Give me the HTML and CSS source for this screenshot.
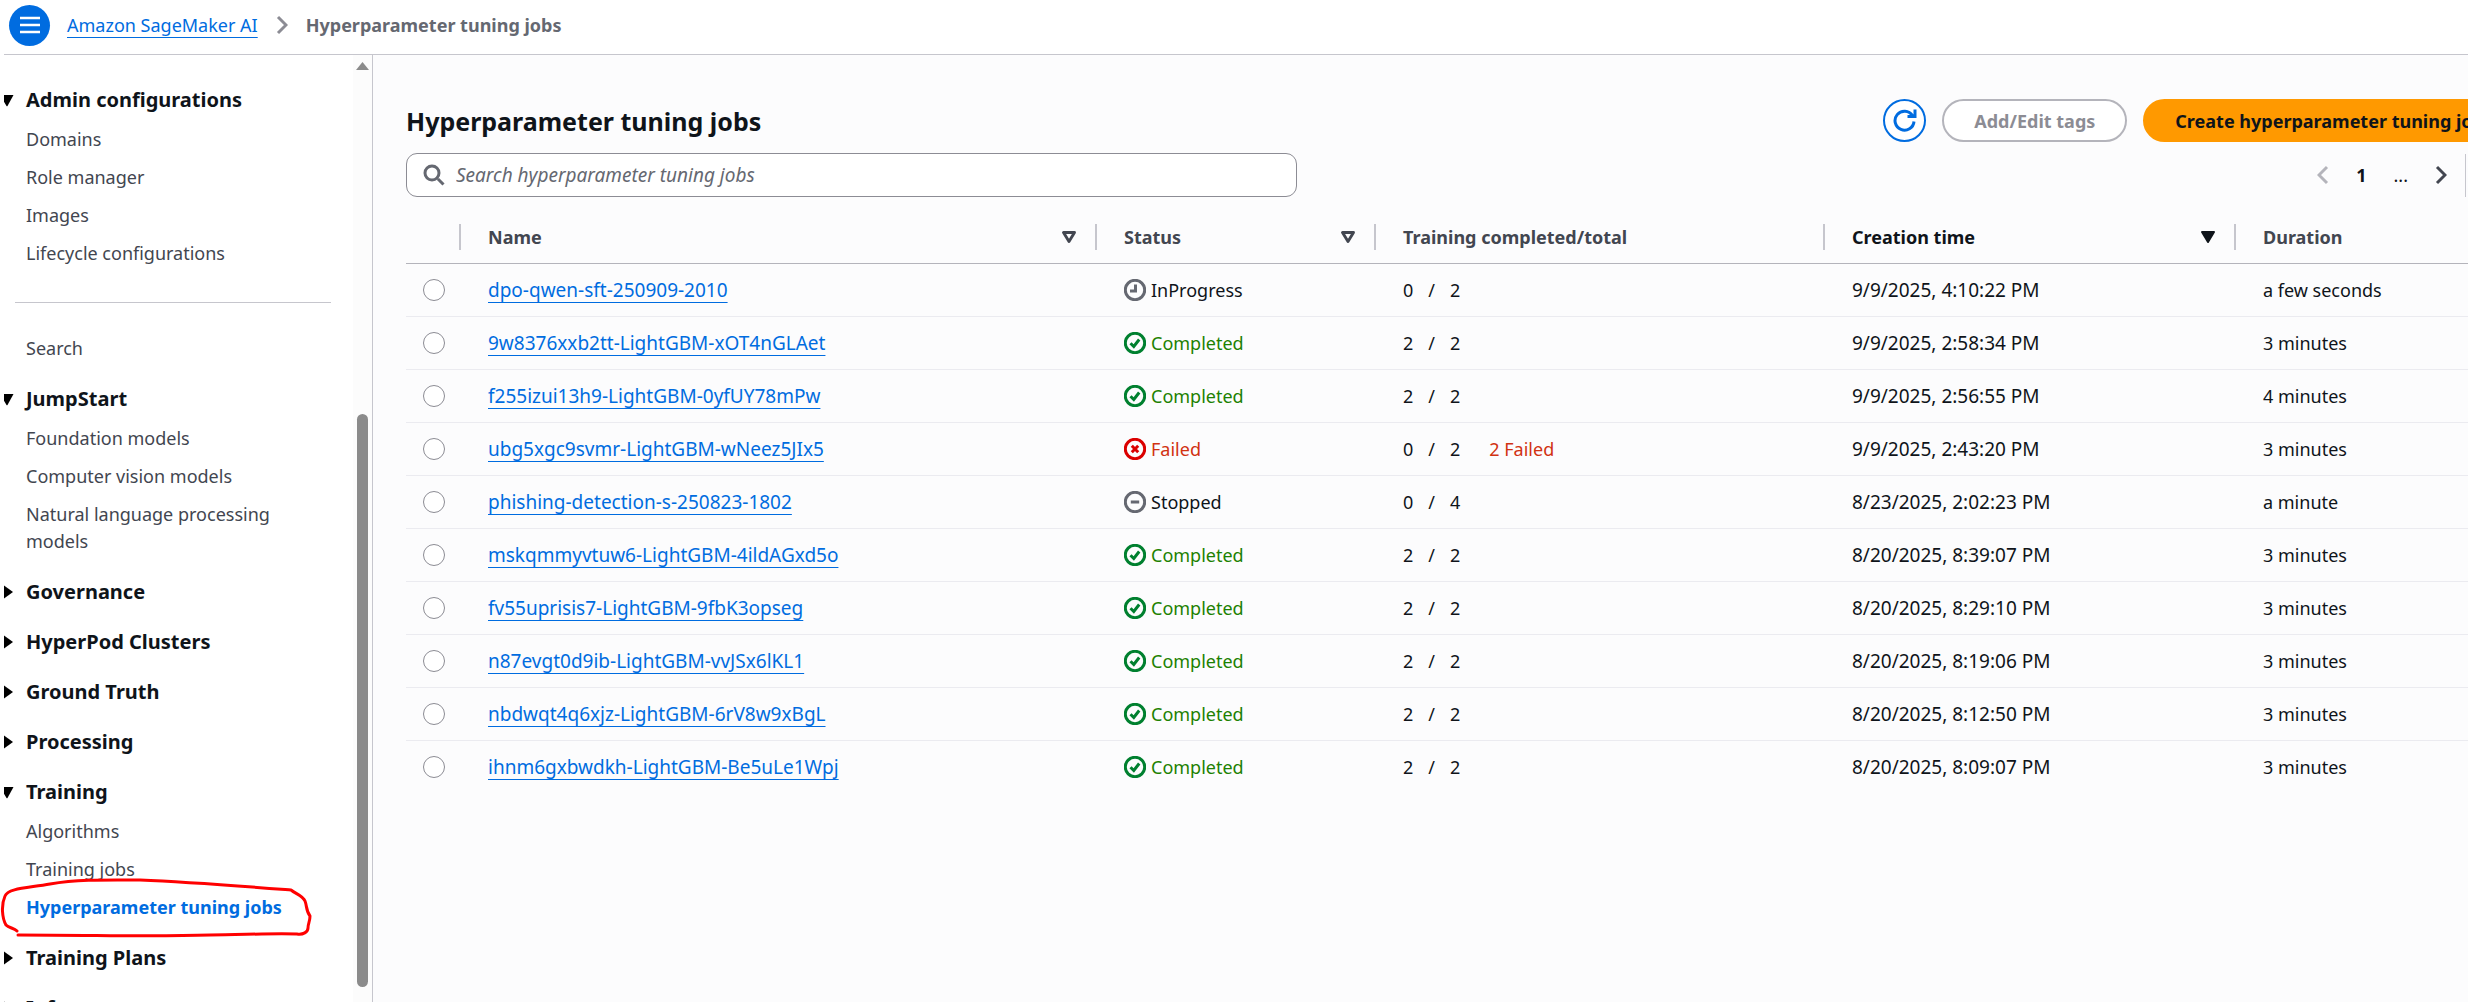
FILE: index.html
```html
<!DOCTYPE html>
<html lang="en">
<head>
<meta charset="utf-8">
<title>Hyperparameter tuning jobs</title>
<link rel="stylesheet" href="styles.css">
</head>
<body>
<svg class="sprite" aria-hidden="true">
  <symbol id="open" viewBox="4 0 12 14"><path d="M0 2h13.500L7.500 13Q7 13.500 6.500 13Z"/></symbol>
  <symbol id="closed" viewBox="4 0 12 14"><path d="M4 0.500L13 7L4 13.500Z"/></symbol>
  <symbol id="sort" viewBox="0 0 16 14"><path d="M2.500 2.500h11L8 11.500Z" fill="none" stroke="currentColor" stroke-width="2.900" stroke-linejoin="round"/></symbol>
  <symbol id="sorted" viewBox="0 0 16 14"><path d="M2 2h12L8 12Z" fill="currentColor" stroke="currentColor" stroke-width="2" stroke-linejoin="round"/></symbol>
  <symbol id="ok" viewBox="0 0 22 22"><circle cx="11" cy="11" r="9.700"/><path d="M6.500 11.200l3.300 3.300 5.400-7"/></symbol>
  <symbol id="fail" viewBox="0 0 22 22"><circle cx="11" cy="11" r="9.700"/><path d="M7.800 7.800l6.400 6.400M14.200 7.800l-6.400 6.400"/></symbol>
  <symbol id="stop" viewBox="0 0 22 22"><circle cx="11" cy="11" r="9.700"/><path d="M6.800 11h8.400"/></symbol>
  <symbol id="wait" viewBox="0 0 22 22"><circle cx="11" cy="11" r="9.700"/><path d="M11.500 5.500v6.500H6"/></symbol>
</svg>

<header class="topbar">
  <button class="menu" type="button" aria-label="Open navigation">
    <svg width="20" height="18" viewBox="0 0 20 18"><path d="M0 2h20M0 9h20M0 16h20" stroke="#fff" stroke-width="2.500"/></svg>
  </button>
  <nav class="crumbs" aria-label="Breadcrumbs">
    <a class="link" href="#">Amazon SageMaker AI</a>
    <svg width="12" height="20" viewBox="0 0 12 20"><path d="M2 2l8 8-8 8" fill="none" stroke="#8c8c94" stroke-width="3"/></svg>
    <span class="current">Hyperparameter tuning jobs</span>
  </nav>
</header>

<div class="shell">
  <nav class="sidebar" aria-label="SageMaker">
    <h2><svg class="caret"><use href="#open"/></svg>Admin configurations</h2>
    <ul>
      <li><a href="#">Domains</a></li>
      <li><a href="#">Role manager</a></li>
      <li><a href="#">Images</a></li>
      <li><a href="#">Lifecycle configurations</a></li>
    </ul>
    <hr>
    <ul>
      <li><a href="#">Search</a></li>
    </ul>
    <h2><svg class="caret"><use href="#open"/></svg>JumpStart</h2>
    <ul>
      <li><a href="#">Foundation models</a></li>
      <li><a href="#">Computer vision models</a></li>
      <li><a href="#">Natural language processing models</a></li>
    </ul>
    <h2><svg class="caret"><use href="#closed"/></svg>Governance</h2>
    <h2><svg class="caret"><use href="#closed"/></svg>HyperPod Clusters</h2>
    <h2><svg class="caret"><use href="#closed"/></svg>Ground Truth</h2>
    <h2><svg class="caret"><use href="#closed"/></svg>Processing</h2>
    <h2><svg class="caret"><use href="#open"/></svg>Training</h2>
    <ul>
      <li><a href="#">Algorithms</a></li>
      <li><a href="#">Training jobs</a></li>
      <li class="marked"><a class="active" href="#" aria-current="page">Hyperparameter tuning jobs</a>
        <svg class="loop" width="314" height="64" viewBox="0 877 314 64"><path d="M17 931C14 928 9 928 6 925C2 918 1 905 5 896C8 888 28 888 50 884C80 879 110 880 140 880C190 882 240 886 291 890C296 894 303 896 305 901C307 906 306 911 310 916C310 922 308 923 308 928C308 932 303 935 297 934C270 933 240 935 210 935C150 937 100 935 18 935"/></svg>
      </li>
    </ul>
    <h2><svg class="caret"><use href="#closed"/></svg>Training Plans</h2>
    <h2><svg class="caret"><use href="#closed"/></svg>Inference</h2>
  </nav>
  <div class="track" aria-hidden="true">
    <svg width="13" height="8" viewBox="0 0 13 8"><path d="M0 8L6.500 0L13 8Z" fill="#8b8b8b"/></svg>
    <div class="before"></div>
    <div class="thumb"></div>
  </div>

  <main class="main">
    <div class="content">
      <div class="title-row">
        <h1>Hyperparameter tuning jobs</h1>
        <div class="actions">
          <button class="btn refresh" type="button" aria-label="Refresh">
            <svg width="24" height="28" viewBox="0 0 24 28"><path d="M21 14.500A9.500 9.500 0 1 1 19.500 8.500M22 2.500V9.500H14.500" fill="none" stroke="#006ce0" stroke-width="3"/></svg>
          </button>
          <button class="btn tags" type="button" disabled>Add/Edit tags</button>
          <button class="btn create" type="button">Create hyperparameter tuning job</button>
        </div>
      </div>
      <div class="filter-row">
        <label class="search">
          <svg width="22" height="22" viewBox="0 0 22 22"><path d="M15 15l5.500 5.500M16 9A7 7 0 1 1 2 9A7 7 0 1 1 16 9" fill="none" stroke="#656871" stroke-width="3"/></svg>
          <input type="text" placeholder="Search hyperparameter tuning jobs" aria-label="Search hyperparameter tuning jobs">
        </label>
        <div class="pages">
          <button type="button" aria-label="Previous page" disabled><svg width="12" height="20" viewBox="0 0 12 20"><path d="M10 2l-8 8 8 8" fill="none" stroke="#b4b4bb" stroke-width="3"/></svg></button>
          <button class="page" type="button">1</button>
          <span class="dots">...</span>
          <button type="button" aria-label="Next page"><svg width="12" height="20" viewBox="0 0 12 20"><path d="M2 2l8 8-8 8" fill="none" stroke="#424650" stroke-width="3"/></svg></button>
        </div>
      </div>

      <table class="jobs">
        <colgroup><col class="c-pick"><col class="c-name"><col class="c-status"><col class="c-training"><col class="c-created"><col></colgroup>
        <thead>
          <tr>
            <th></th>
            <th><div>Name<svg><use href="#sort"/></svg></div></th>
            <th><div>Status<svg><use href="#sort"/></svg></div></th>
            <th><div>Training completed/total</div></th>
            <th class="sorted"><div>Creation time<svg><use href="#sorted"/></svg></div></th>
            <th><div>Duration</div></th>
          </tr>
        </thead>
        <tbody>
          <tr><td><input type="radio" name="job" aria-label="dpo-qwen-sft-250909-2010"></td><td class="wide"><a class="link" href="#">dpo-qwen-sft-250909-2010</a></td><td><span class="status wait"><svg><use href="#wait"/></svg>InProgress</span></td><td><span class="count"><span>0</span><span>/</span><span>2</span></span></td><td class="wide">9/9/2025, 4:10:22 PM</td><td>a few seconds</td></tr>
          <tr><td><input type="radio" name="job" aria-label="9w8376xxb2tt-LightGBM-xOT4nGLAet"></td><td class="wide"><a class="link" href="#">9w8376xxb2tt-LightGBM-xOT4nGLAet</a></td><td><span class="status ok"><svg><use href="#ok"/></svg>Completed</span></td><td><span class="count"><span>2</span><span>/</span><span>2</span></span></td><td class="wide">9/9/2025, 2:58:34 PM</td><td>3 minutes</td></tr>
          <tr><td><input type="radio" name="job" aria-label="f255izui13h9-LightGBM-0yfUY78mPw"></td><td class="wide"><a class="link" href="#">f255izui13h9-LightGBM-0yfUY78mPw</a></td><td><span class="status ok"><svg><use href="#ok"/></svg>Completed</span></td><td><span class="count"><span>2</span><span>/</span><span>2</span></span></td><td class="wide">9/9/2025, 2:56:55 PM</td><td>4 minutes</td></tr>
          <tr><td><input type="radio" name="job" aria-label="ubg5xgc9svmr-LightGBM-wNeez5JIx5"></td><td class="wide"><a class="link" href="#">ubg5xgc9svmr-LightGBM-wNeez5JIx5</a></td><td><span class="status fail"><svg><use href="#fail"/></svg>Failed</span></td><td><span class="count"><span>0</span><span>/</span><span>2</span><span class="failed">2 Failed</span></span></td><td class="wide">9/9/2025, 2:43:20 PM</td><td>3 minutes</td></tr>
          <tr><td><input type="radio" name="job" aria-label="phishing-detection-s-250823-1802"></td><td class="wide"><a class="link" href="#">phishing-detection-s-250823-1802</a></td><td><span class="status wait"><svg><use href="#stop"/></svg>Stopped</span></td><td><span class="count"><span>0</span><span>/</span><span>4</span></span></td><td class="wide">8/23/2025, 2:02:23 PM</td><td>a minute</td></tr>
          <tr><td><input type="radio" name="job" aria-label="mskqmmyvtuw6-LightGBM-4ildAGxd5o"></td><td class="wide"><a class="link" href="#">mskqmmyvtuw6-LightGBM-4ildAGxd5o</a></td><td><span class="status ok"><svg><use href="#ok"/></svg>Completed</span></td><td><span class="count"><span>2</span><span>/</span><span>2</span></span></td><td class="wide">8/20/2025, 8:39:07 PM</td><td>3 minutes</td></tr>
          <tr><td><input type="radio" name="job" aria-label="fv55uprisis7-LightGBM-9fbK3opseg"></td><td class="wide"><a class="link" href="#">fv55uprisis7-LightGBM-9fbK3opseg</a></td><td><span class="status ok"><svg><use href="#ok"/></svg>Completed</span></td><td><span class="count"><span>2</span><span>/</span><span>2</span></span></td><td class="wide">8/20/2025, 8:29:10 PM</td><td>3 minutes</td></tr>
          <tr><td><input type="radio" name="job" aria-label="n87evgt0d9ib-LightGBM-vvJSx6lKL1"></td><td class="wide"><a class="link" href="#">n87evgt0d9ib-LightGBM-vvJSx6lKL1</a></td><td><span class="status ok"><svg><use href="#ok"/></svg>Completed</span></td><td><span class="count"><span>2</span><span>/</span><span>2</span></span></td><td class="wide">8/20/2025, 8:19:06 PM</td><td>3 minutes</td></tr>
          <tr><td><input type="radio" name="job" aria-label="nbdwqt4q6xjz-LightGBM-6rV8w9xBgL"></td><td class="wide"><a class="link" href="#">nbdwqt4q6xjz-LightGBM-6rV8w9xBgL</a></td><td><span class="status ok"><svg><use href="#ok"/></svg>Completed</span></td><td><span class="count"><span>2</span><span>/</span><span>2</span></span></td><td class="wide">8/20/2025, 8:12:50 PM</td><td>3 minutes</td></tr>
          <tr><td><input type="radio" name="job" aria-label="ihnm6gxbwdkh-LightGBM-Be5uLe1Wpj"></td><td class="wide"><a class="link" href="#">ihnm6gxbwdkh-LightGBM-Be5uLe1Wpj</a></td><td><span class="status ok"><svg><use href="#ok"/></svg>Completed</span></td><td><span class="count"><span>2</span><span>/</span><span>2</span></span></td><td class="wide">8/20/2025, 8:09:07 PM</td><td>3 minutes</td></tr>
        </tbody>
      </table>
    </div>
  </main>
</div>
</body>
</html>
```
FILE: styles.css
```css
* { box-sizing: border-box; }

body {
  margin: 0;
  height: 100vh;
  overflow: hidden;
  display: flex;
  flex-direction: column;
  background: #fff;
  color: #0f141a;
  font: 18px/28px "Noto Sans", "Open Sans", sans-serif;
}

button, input { font: inherit; color: inherit; }
button { cursor: pointer; }
.sprite { display: none; }

.link {
  color: #006ce0;
  text-decoration: underline;
  text-decoration-thickness: 1px;
  text-underline-offset: 5px;
}

/* Top bar */
.topbar {
  flex: none;
  height: 55px;
  margin-left: 4px;
  padding: 0 5px 4px;
  display: flex;
  align-items: center;
  gap: 17px;
  border-bottom: 1px solid #c6c6cd;
}
.menu {
  width: 41px;
  height: 41px;
  padding: 0;
  border: 0;
  border-radius: 50%;
  background: #006ce0;
  display: grid;
  place-items: center;
}
.crumbs { display: flex; align-items: center; gap: 18px; }
.current { color: #656871; font-weight: 700; }

/* Side navigation */
.shell { flex: 1; min-height: 0; display: flex; }
.sidebar {
  flex: none;
  width: 353px;
  padding-top: 31px;
  overflow: hidden;
}
.sidebar h2 {
  margin: 22px 0 0;
  padding-left: 4px;
  display: flex;
  align-items: center;
  gap: 10px;
  font-size: 20px;
  line-height: 28px;
  font-weight: 700;
}
.sidebar h2:first-child { margin-top: 0; }
.sidebar ul + h2 { margin-top: 23px; }
.caret { width: 12px; height: 14px; flex: none; }
.sidebar ul {
  margin: 12px 0 0;
  padding: 0 64px 0 26px;
  list-style: none;
  display: grid;
  gap: 11px;
  line-height: 27px;
}
.sidebar li a { display: block; color: #424650; text-decoration: none; }
.sidebar li a.active { color: #006ce0; font-weight: 700; }
.sidebar hr {
  margin: 35px 22px 32px 15px;
  border: 0;
  border-top: 1px solid #c6c6cd;
}
.marked { position: relative; }
.loop {
  position: absolute;
  left: -26px;
  top: -17px;
  fill: none;
  stroke: #f00;
  stroke-width: 3;
  stroke-linecap: round;
  stroke-linejoin: round;
  pointer-events: none;
}

.track {
  flex: none;
  width: 20px;
  padding: 7px 0 15px;
  display: flex;
  flex-direction: column;
  align-items: center;
  background: #fcfcfc;
  border-right: 1px solid #c6c6cd;
}
.before { flex: 344; }
.thumb { flex: 573; width: 11px; border-radius: 6px; background: #8b8b8b; }

/* Main panel: the toolbar and table run past the right edge */
.main { flex: 1; min-width: 0; overflow: hidden; background: #fcfcfd; }
.content { margin: 44px -48px 0 33px; }
.title-row, .filter-row {
  display: flex;
  align-items: center;
  justify-content: space-between;
}
h1 { margin: 0; font-size: 25px; line-height: 32px; font-weight: 700; }
.actions { display: flex; gap: 16px; }
.btn {
  height: 43px;
  padding: 0 30px;
  border: 2px solid;
  border-radius: 22px;
  background: #fff;
  font-weight: 700;
  white-space: nowrap;
}
.refresh {
  width: 43px;
  padding: 0;
  border-color: #006ce0;
  display: grid;
  place-items: center;
}
.tags { border-color: #b4b4bb; color: #8c8c94; }
.create { border-color: #f90; background: #f90; color: #0f141a; }

.filter-row { margin-top: 11px; }
.search {
  width: 891px;
  height: 44px;
  padding: 0 16px;
  display: flex;
  align-items: center;
  gap: 11px;
  border: 1px solid #8c8c94;
  border-radius: 11px;
  background: #fff;
}
.search input {
  flex: 1;
  min-width: 0;
  padding: 0;
  border: 0;
  outline: 0;
  background: none;
  font-size: 19px;
}
.search input::placeholder { color: #656871; font-style: italic; opacity: 1; }
.pages {
  height: 43px;
  margin-right: 50px;
  padding-right: 18px;
  display: flex;
  align-items: center;
  gap: 27px;
  border-right: 1px solid #c6c6cd;
}
.pages button { padding: 0; border: 0; background: none; display: flex; }
.page { font-weight: 700; }

/* Jobs table */
.jobs {
  width: 100%;
  margin-top: 15px;
  table-layout: fixed;
  border-collapse: collapse;
}
.c-pick { width: 53px; }
.c-name { width: 636px; }
.c-status { width: 279px; }
.c-training { width: 449px; }
.c-created { width: 411px; }
th, td { padding: 0; text-align: left; white-space: nowrap; }
th { height: 51px; color: #424650; border-bottom: 1px solid #b4b4bb; }
th div {
  height: 26px;
  padding: 0 18px 0 27px;
  display: flex;
  align-items: center;
  justify-content: space-between;
  border-left: 2px solid #c6c6cd;
}
th svg { width: 16px; height: 14px; }
th.sorted { color: #0f141a; }
td { height: 53px; padding-left: 29px; border-bottom: 1px solid #ebebf0; }
td:first-child { padding-left: 17px; }
td.wide { font-size: 19px; }
tbody tr:last-child td { border-bottom: 0; }
td input {
  appearance: none;
  display: block;
  width: 22px;
  height: 22px;
  margin: 0;
  border: 1px solid #8c8c94;
  border-radius: 50%;
  background: #fff;
}
.status { display: flex; align-items: center; gap: 5px; }
.status svg {
  width: 22px;
  height: 22px;
  fill: none;
  stroke: #656871;
  stroke-width: 3px;
}
.status.ok { color: #1d8102; }
.status.ok svg { stroke: #00802f; }
.status.fail { color: #d13212; }
.status.fail svg { stroke: #db0000; }
.count { display: flex; gap: 15px; }
.failed { margin-left: 14px; color: #d13212; }
```
